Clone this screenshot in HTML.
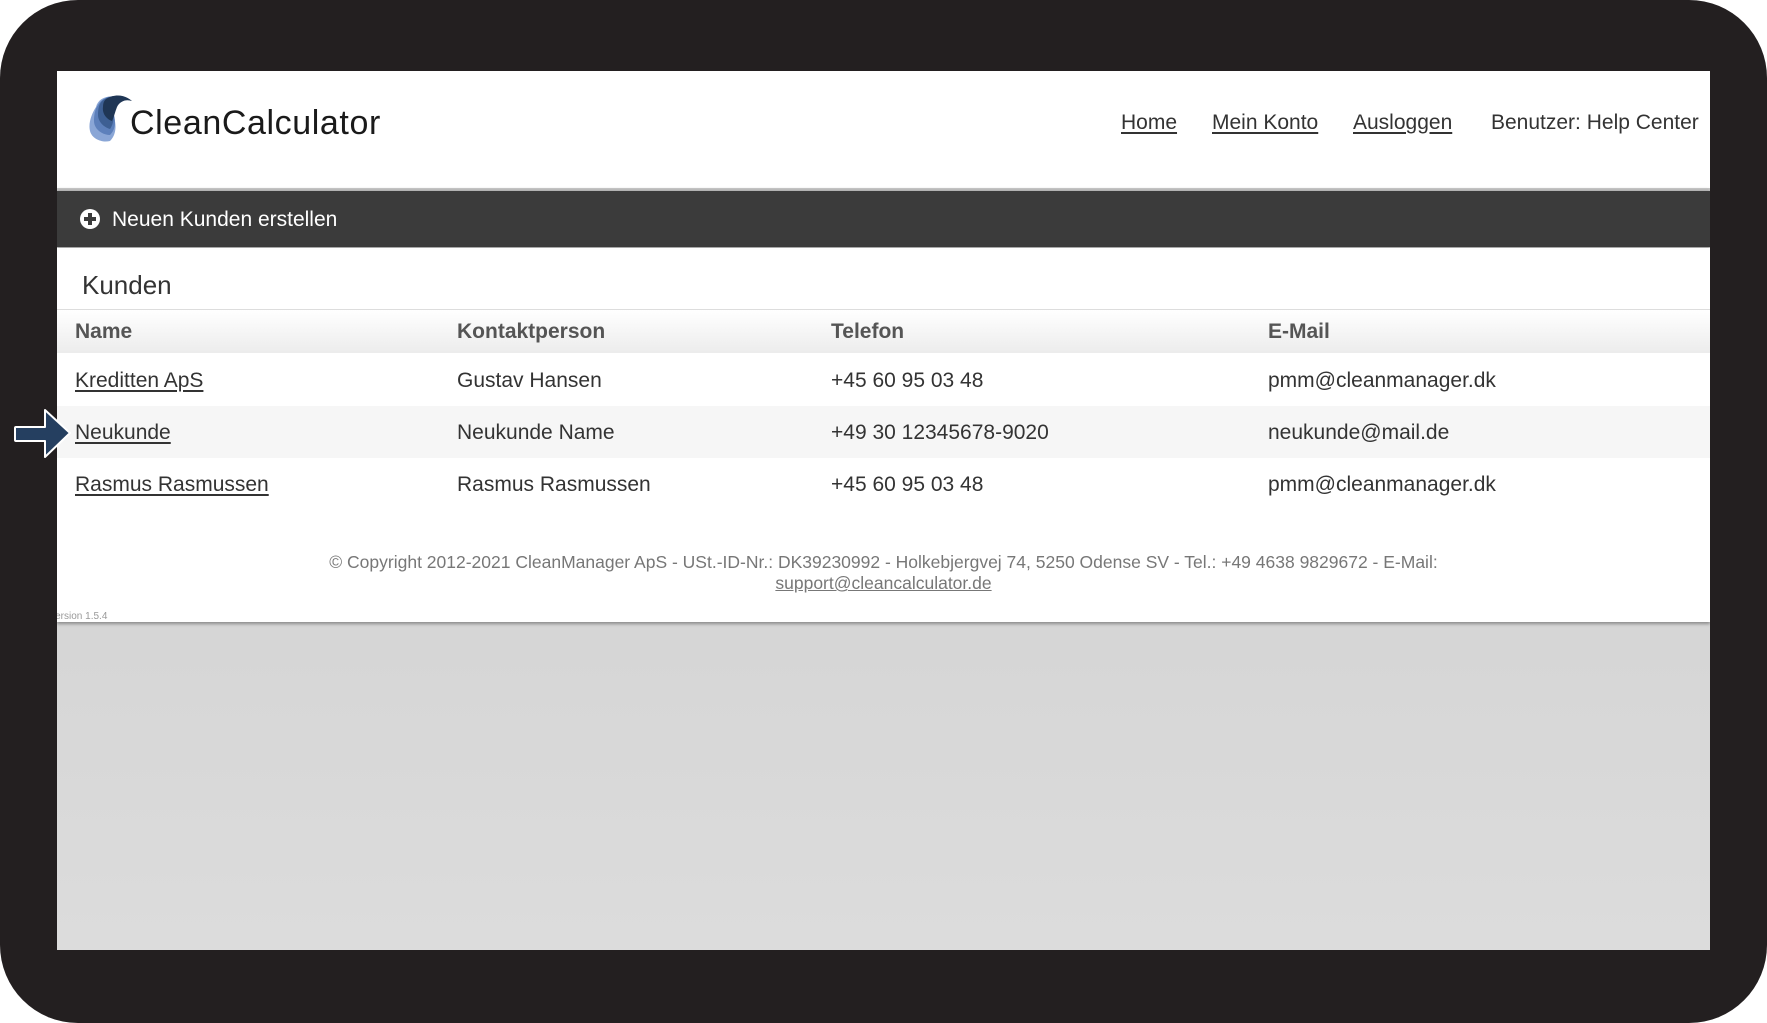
<!DOCTYPE html>
<html><head><meta charset="utf-8"><style>
*{margin:0;padding:0;box-sizing:border-box}
html,body{width:1767px;height:1023px;overflow:hidden;background:#fff;font-family:"Liberation Sans",sans-serif}
#frame{position:absolute;left:0;top:0;width:1767px;height:1023px;background:#231f20;border-radius:78px}
#c{position:absolute;left:57px;top:71px;width:1653px;height:879px;background:linear-gradient(#cbcbcb,#dcdcdc);overflow:hidden}
.a{position:absolute;white-space:nowrap}
#hdr{position:absolute;left:0;top:0;width:1653px;height:117px;background:#fff}
#bar{position:absolute;left:0;top:120px;width:1653px;height:56px;background:#3b3b3b;box-shadow:0 -2px 3px rgba(0,0,0,.15),0 2px 3px rgba(0,0,0,.2)}
#main{position:absolute;left:0;top:177px;width:1653px;height:374px;background:#fff;box-shadow:0 2px 3px rgba(0,0,0,.35)}
.nav{font-size:21px;color:#333;top:39px;line-height:26px}
.nav u{text-decoration:underline;text-underline-offset:3px}
.th{top:248px;font-size:21px;font-weight:bold;color:#555;line-height:26px}
.td{font-size:21px;color:#333;line-height:26px}
.td u{text-underline-offset:3px}
</style></head><body>
<div id="frame"></div>
<div id="c">
 <div id="hdr">
  <svg class="a" style="left:31px;top:22px" width="48" height="50" viewBox="0 0 48 50">
   <path d="M8 14 C10 6 18 2 28 4 C24 8 22 12 24 18 C28 28 30 40 22 48 C14 50 4 46 2 38 C0 30 4 20 8 14Z" fill="#8aa6d6"/>
   <path d="M10 12 C14 5 22 2 30 4 C26 8 24 12 25 18 C28 28 28 36 22 42 C14 42 6 36 6 28 C6 22 7 16 10 12Z" fill="#5d80bb"/>
   <path d="M14 8 C20 3 28 2 34 4 C30 7 26 12 26 18 C26 26 25 32 22 36 C15 34 10 28 10 22 C10 16 11 11 14 8Z" fill="#3d5f93"/>
   <path d="M18 6 C26 1 36 1 44 8 C38 6 32 8 29 14 C27 19 26 24 24 28 C18 26 14 20 15 14 C15 10 16 8 18 6Z" fill="#1f3655"/>
  </svg>
  <div class="a" style="left:73px;top:31px;font-size:34px;color:#1a1a1a;line-height:42px;letter-spacing:0.6px">CleanCalculator</div>
  <div class="a nav" style="left:1064px"><u>Home</u></div>
  <div class="a nav" style="left:1155px"><u>Mein Konto</u></div>
  <div class="a nav" style="left:1296px"><u>Ausloggen</u></div>
  <div class="a nav" style="left:1434px">Benutzer: Help Center</div>
 </div>
 <div id="bar">
  <svg class="a" style="left:22px;top:17px" width="22" height="22" viewBox="0 0 22 22"><circle cx="11" cy="11" r="10" fill="#fff"/><rect x="9" y="5" width="4" height="12" fill="#3b3b3b"/><rect x="5" y="9" width="12" height="4" fill="#3b3b3b"/></svg>
  <div class="a" style="left:55px;top:16px;font-size:21px;color:#fff;line-height:26px">Neuen Kunden erstellen</div>
 </div>
 <div id="main"></div>
 <div class="a" style="left:25px;top:199px;font-size:26px;color:#333;line-height:30px">Kunden</div>
 <div class="a" style="left:0;top:238px;width:1653px;height:44px;background:linear-gradient(#fff,#ececec);border-top:1px solid #ddd"></div>
 <div class="a th" style="left:18px">Name</div>
 <div class="a th" style="left:400px">Kontaktperson</div>
 <div class="a th" style="left:774px">Telefon</div>
 <div class="a th" style="left:1211px">E-Mail</div>
 <div class="a" style="left:0;top:335px;width:1653px;height:52px;background:#f6f6f6"></div>
 <div class="a td" style="left:18px;top:297px"><u>Kreditten ApS</u></div>
 <div class="a td" style="left:400px;top:297px">Gustav Hansen</div>
 <div class="a td" style="left:774px;top:297px">+45 60 95 03 48</div>
 <div class="a td" style="left:1211px;top:297px">pmm@cleanmanager.dk</div>
 <div class="a td" style="left:18px;top:349px"><u>Neukunde</u></div>
 <div class="a td" style="left:400px;top:349px">Neukunde Name</div>
 <div class="a td" style="left:774px;top:349px">+49 30 12345678-9020</div>
 <div class="a td" style="left:1211px;top:349px">neukunde@mail.de</div>
 <div class="a td" style="left:18px;top:401px"><u>Rasmus Rasmussen</u></div>
 <div class="a td" style="left:400px;top:401px">Rasmus Rasmussen</div>
 <div class="a td" style="left:774px;top:401px">+45 60 95 03 48</div>
 <div class="a td" style="left:1211px;top:401px">pmm@cleanmanager.dk</div>
 <div class="a" style="left:0;top:481px;width:1653px;text-align:center;font-size:17.5px;color:#777;line-height:21px">© Copyright 2012-2021 CleanManager ApS - USt.-ID-Nr.: DK39230992 - Holkebjergvej 74, 5250 Odense SV - Tel.: +49 4638 9829672 - E-Mail:<br><u>support@cleancalculator.de</u></div>
 <div class="a" style="left:-8px;top:540px;font-size:10px;color:#999;line-height:12px">Version 1.5.4</div>
</div>
<svg class="a" style="left:12px;top:406px" width="62" height="56" viewBox="0 0 62 56">
 <path d="M4 21 L33 21 L33 4 L58 27 L33 51 L33 35 L4 35 Q3 35 3 34 L3 22 Q3 21 4 21Z" fill="#253f60" stroke="#fff" stroke-width="2" stroke-linejoin="round"/>
</svg>
</body></html>
